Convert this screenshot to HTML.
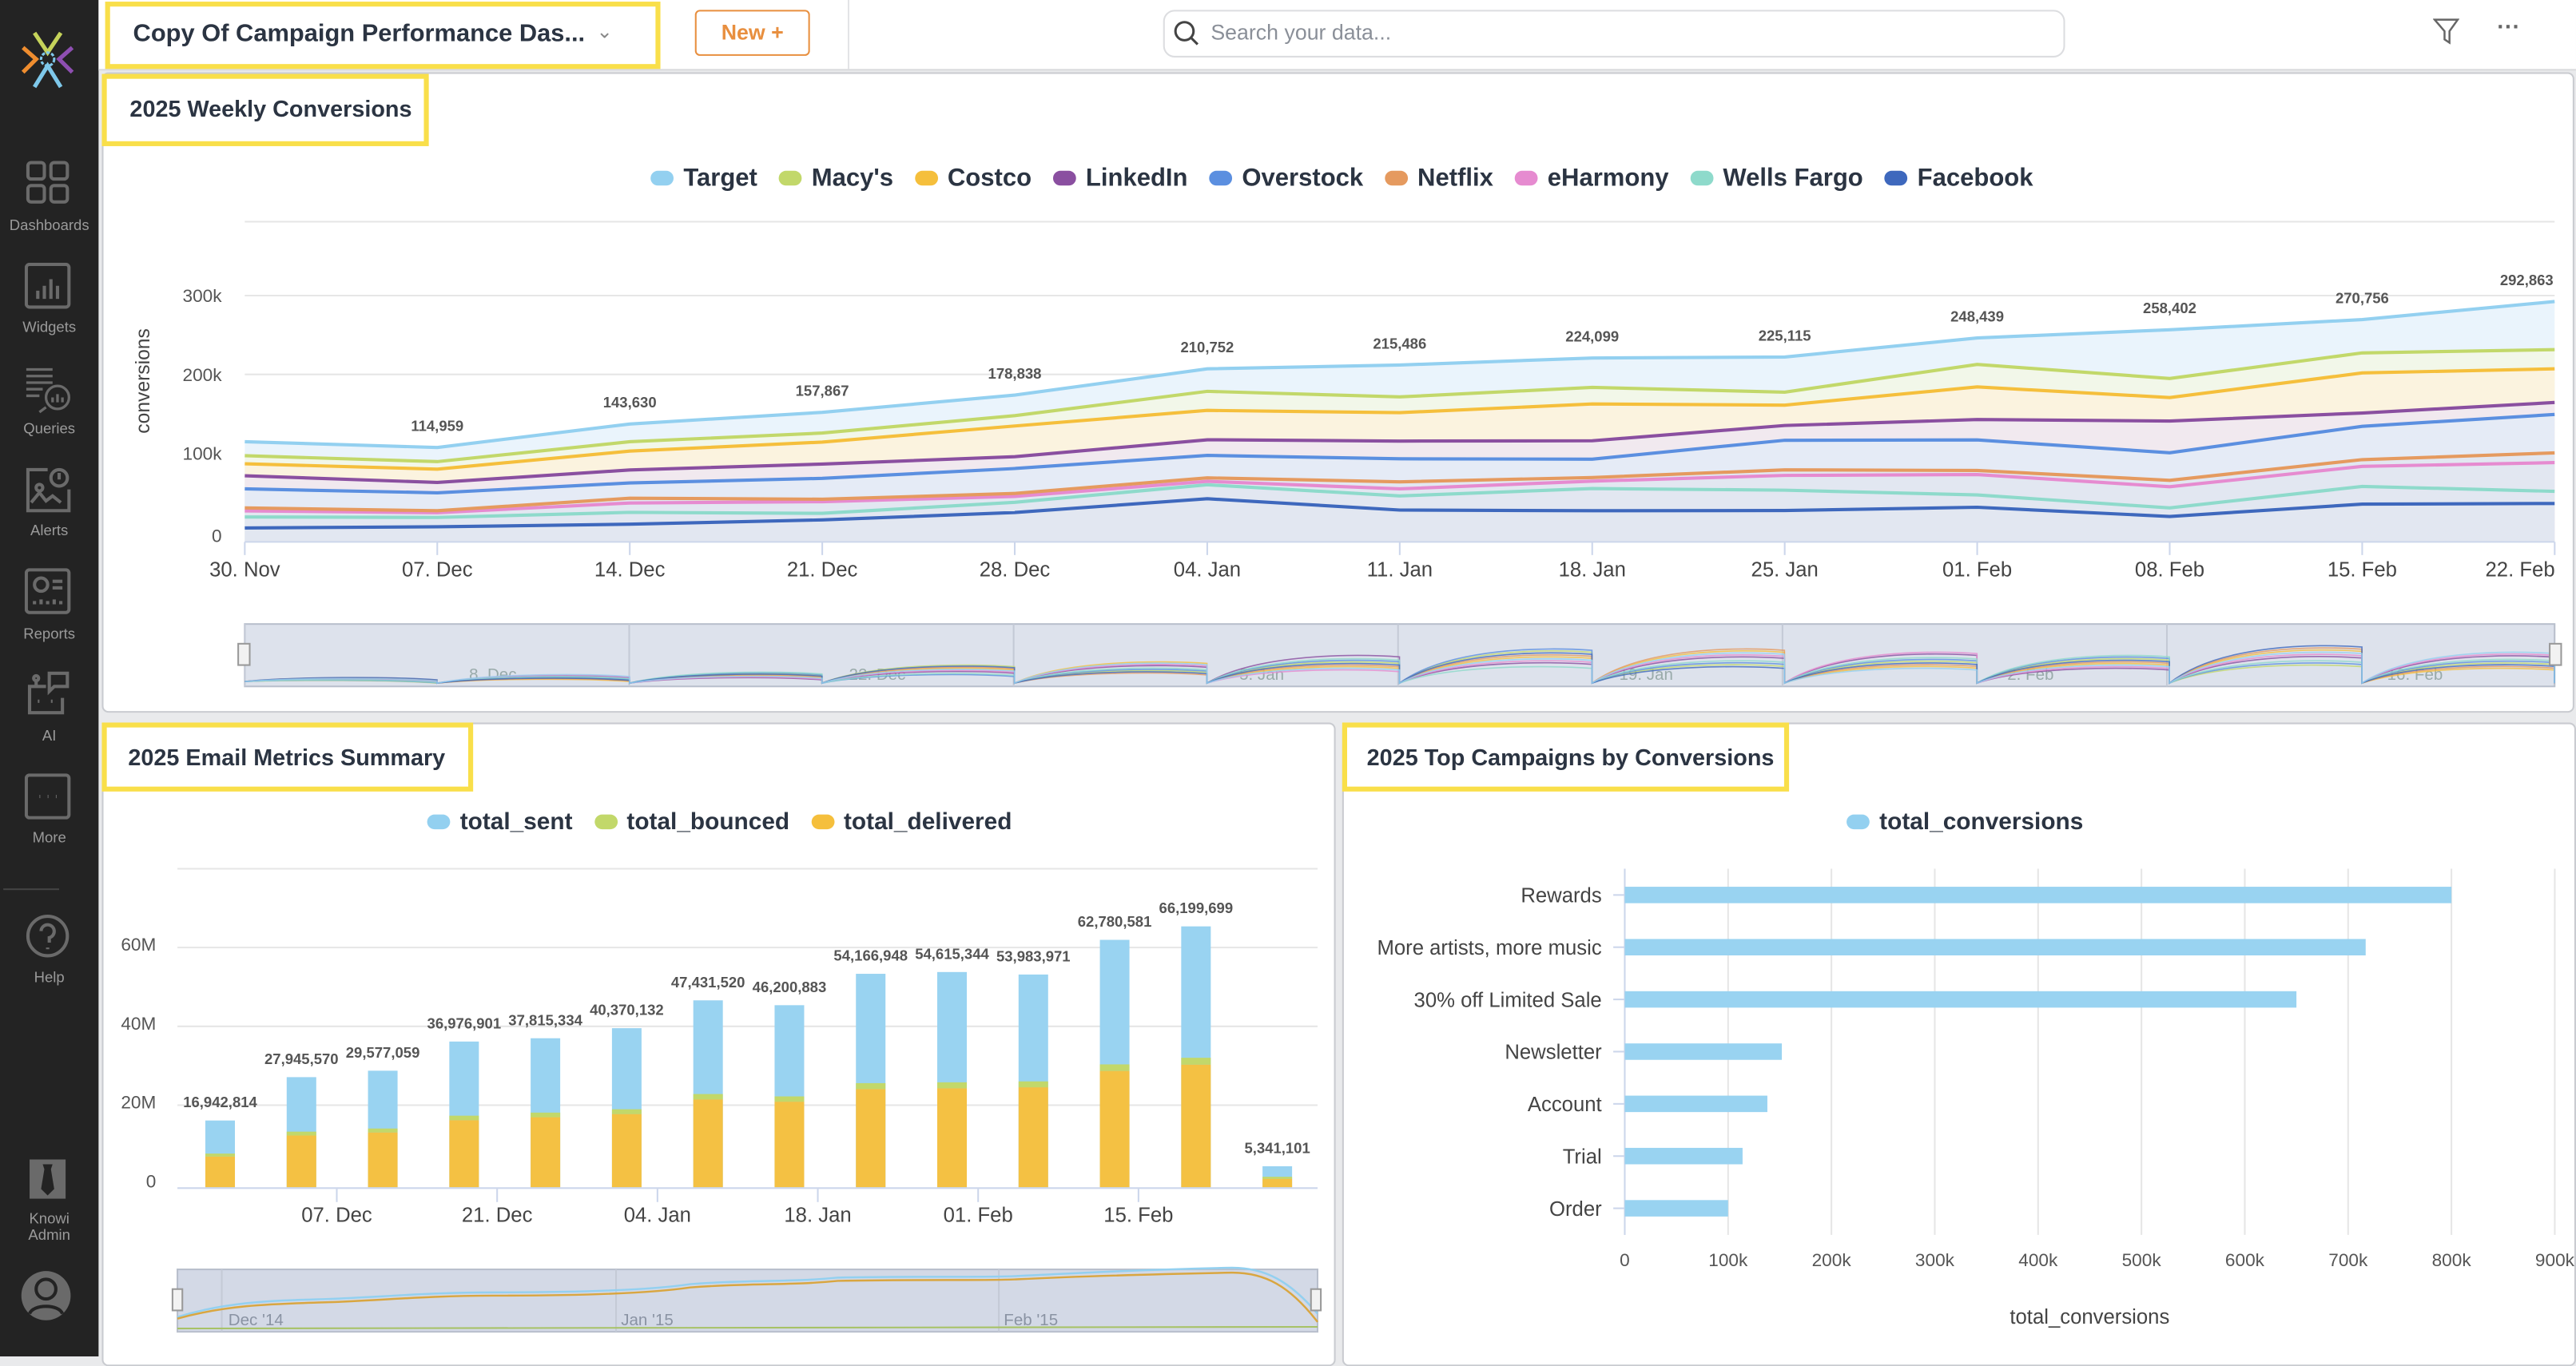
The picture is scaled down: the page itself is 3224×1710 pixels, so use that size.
<!DOCTYPE html>
<html><head><meta charset="utf-8">
<style>
html,body{margin:0;padding:0;width:3224px;height:1698px;overflow:hidden;background:#e9eaec;}
#w{position:absolute;left:0;top:0;width:1568px;height:826px;transform:scale(2.0561,2.0557);transform-origin:0 0;font-family:"Liberation Sans",sans-serif;background:#e9eaec;}
.abs{position:absolute;}
#side{left:0;top:0;width:60px;height:826px;background:#232323;}
.si{position:absolute;left:0;width:60px;text-align:center;color:#9a9a9a;font-size:9px;}
#top{left:60px;top:0;width:1508px;height:42px;background:#fff;border-bottom:1px solid #d8d9dc;}
.yb{position:absolute;background:#f9df4a;}
.yb div{position:absolute;left:3px;top:3px;right:3px;bottom:3px;background:#fff;color:#2b3442;font-weight:bold;white-space:nowrap;}
.panel{position:absolute;background:#fff;border:1px solid #c9cbd0;border-radius:4px;}
.lg{position:absolute;font-size:14.5px;font-weight:bold;color:#2b3442;white-space:nowrap;}
.lg span.d{display:inline-block;width:14px;height:9px;border-radius:5px;margin:0 6px 0 13px;vertical-align:0px;}
svg text{font-family:"Liberation Sans",sans-serif;}
</style></head><body><div id="w">
<div id="side" class="abs">
<svg class="abs" style="left:10px;top:17px" width="38" height="38" viewBox="0 0 38 38">
<path d="M11 3 L19 15 L27 3" stroke="#c5d35a" stroke-width="2.5" fill="none"/>
<path d="M4 12 L12 19 L4 27" stroke="#ef8d2f" stroke-width="2.5" fill="none"/>
<path d="M34 12 L26 19 L34 27" stroke="#8e4fb1" stroke-width="2.5" fill="none"/>
<path d="M11 36 L19 23 L27 36" stroke="#7ec8ea" stroke-width="2.5" fill="none"/>
<circle cx="19" cy="19" r="4" stroke="#7ec8ea" stroke-width="1.5" fill="none" stroke-dasharray="2 1"/>
</svg>
<svg class="abs" style="left:15px;top:97px" width="28" height="28" viewBox="0 0 28 28" fill="none" stroke="#6a6a6a" stroke-width="2"><rect x="2" y="2" width="10" height="10" rx="2"/><rect x="16" y="2" width="10" height="10" rx="2"/><rect x="2" y="16" width="10" height="10" rx="2"/><rect x="16" y="16" width="10" height="10" rx="2"/></svg>
<div class="si" style="top:132px">Dashboards</div>
<svg class="abs" style="left:15px;top:160px" width="28" height="28" viewBox="0 0 28 28" fill="none" stroke="#6a6a6a" stroke-width="2"><rect x="1" y="1" width="26" height="26" rx="2"/><path d="M8 22v-5M12 22v-8M16 22v-12M20 22v-8"/></svg>
<div class="si" style="top:194px">Widgets</div>
<svg class="abs" style="left:14px;top:222px" width="30" height="30" viewBox="0 0 30 30" fill="none" stroke="#6a6a6a" stroke-width="1.6"><path d="M2 3h16M2 7h16M2 11h16M2 15h10M2 19h8"/><circle cx="21" cy="20" r="7" fill="#232323"/><path d="M14 26l-4 3M18 23v-3M21 23v-5M24 23v-3"/></svg>
<div class="si" style="top:256px">Queries</div>
<svg class="abs" style="left:15px;top:284px" width="28" height="28" viewBox="0 0 28 28" fill="none" stroke="#6a6a6a" stroke-width="2"><path d="M14 2H2v25h25V14"/><circle cx="21" cy="7" r="5"/><path d="M21 4v4M4 22l5-6 4 5 4-3 5 4"/><circle cx="9" cy="13" r="2"/></svg>
<div class="si" style="top:318px">Alerts</div>
<svg class="abs" style="left:15px;top:346px" width="28" height="28" viewBox="0 0 28 28" fill="none" stroke="#6a6a6a" stroke-width="2"><rect x="1" y="1" width="26" height="26" rx="2"/><circle cx="10" cy="10" r="4"/><path d="M17 8h6M17 12h6M6 22v-2M10 22v-3M14 22v-2M18 22v-3M22 22v-2"/></svg>
<div class="si" style="top:381px">Reports</div>
<svg class="abs" style="left:15px;top:408px" width="28" height="28" viewBox="0 0 28 28" fill="none" stroke="#6a6a6a" stroke-width="2"><path d="M13 10H3v16h20V17"/><path d="M14 2h12v8h-8l-3 3V2z"/><circle cx="7" cy="5" r="1.5"/><path d="M7 7v3M8 19h1M16 19h1"/></svg>
<div class="si" style="top:443px">AI</div>
<svg class="abs" style="left:15px;top:471px" width="28" height="28" viewBox="0 0 28 28" fill="none" stroke="#6a6a6a" stroke-width="2"><rect x="1" y="1" width="26" height="26" rx="2"/><path d="M9 14h.5M14 14h.5M19 14h.5"/></svg>
<div class="si" style="top:505px">More</div>
<div class="abs" style="left:2px;top:541px;width:34px;height:1px;background:#444"></div>
<svg class="abs" style="left:15px;top:556px" width="28" height="28" viewBox="0 0 28 28" fill="none" stroke="#6a6a6a" stroke-width="2"><circle cx="14" cy="14" r="12"/><path d="M10 11a4 4 0 1 1 5 4v3M14 21v1"/></svg>
<div class="si" style="top:590px">Help</div>
<svg class="abs" style="left:18px;top:706px" width="22" height="24" viewBox="0 0 22 24"><rect x="0" y="0" width="22" height="24" fill="#6a6a6a"/><path d="M8 3h6l-1 3 2 12-4 4-4-4 2-12z" fill="#232323"/></svg>
<div class="si" style="top:737px;line-height:10px">Knowi<br>Admin</div>
<svg class="abs" style="left:12px;top:773px" width="32" height="32" viewBox="0 0 32 32"><circle cx="16" cy="16" r="15" fill="#6a6a6a"/><circle cx="16" cy="12" r="6" fill="none" stroke="#232323" stroke-width="2"/><path d="M6 27c2-6 18-6 20 0" fill="none" stroke="#232323" stroke-width="2"/></svg>
</div>

<div id="top" class="abs">
<div class="yb" style="left:4px;top:1px;width:338px;height:41px"><div style="font-size:15px;line-height:34px;padding-left:14px">Copy Of Campaign Performance Das...<span style="position:absolute;left:296px;top:-2px;color:#888;font-weight:normal;font-size:12px">&#8964;</span></div></div>
<div class="abs" style="left:363px;top:6px;width:68px;height:26px;border:1px solid #e88f3f;border-radius:3px;color:#e88f3f;font-weight:bold;font-size:13px;text-align:center;line-height:26px">New +</div>
<div class="abs" style="left:456px;top:0;width:1px;height:42px;background:#e3e4e6"></div>
<div class="abs" style="left:648px;top:6px;width:547px;height:27px;border:1px solid #dcdde0;border-radius:7px;"></div>
<svg class="abs" style="left:654px;top:12px" width="16" height="16" viewBox="0 0 16 16" fill="none" stroke="#444" stroke-width="1.5"><circle cx="7" cy="7" r="5.5"/><path d="M11 11l4 4"/></svg>
<div class="abs" style="left:677px;top:12px;font-size:13px;color:#8a8f98">Search your data...</div>
<svg class="abs" style="left:1421px;top:11px" width="16" height="16" viewBox="0 0 16 16" fill="none" stroke="#666" stroke-width="1.2"><path d="M1 1h14l-5 7v7l-3-2V8z"/></svg>
<div class="abs" style="left:1460px;top:8px;font-size:14px;color:#666;font-weight:bold">···</div>
</div>

<div class="panel" style="left:62px;top:44px;width:1503px;height:388px"></div>
<div class="panel" style="left:62px;top:440px;width:749px;height:390px"></div>
<div class="panel" style="left:817px;top:440px;width:749px;height:390px"></div>

<div class="yb" style="left:62px;top:45px;width:199px;height:44px"><div style="font-size:14px;line-height:36px;padding-left:14px">2025 Weekly Conversions</div></div>
<div class="yb" style="left:62px;top:440px;width:226px;height:42px"><div style="font-size:14px;line-height:36px;padding-left:13px">2025 Email Metrics Summary</div></div>
<div class="yb" style="left:817px;top:440px;width:272px;height:42px"><div style="font-size:14px;line-height:36px;padding-left:12px">2025 Top Campaigns by Conversions</div></div>

<div class="lg" style="left:383px;top:100px;font-size:15.1px"><span class="d" style="background:#93d0f0"></span>Target<span class="d" style="background:#c2d86a"></span>Macy's<span class="d" style="background:#f5bf3c"></span>Costco<span class="d" style="background:#8a4fa0"></span>LinkedIn<span class="d" style="background:#5b8fe0"></span>Overstock<span class="d" style="background:#e59a5f"></span>Netflix<span class="d" style="background:#e68bd0"></span>eHarmony<span class="d" style="background:#8edacb"></span>Wells Fargo<span class="d" style="background:#3e68bd"></span>Facebook</div>
<div class="lg" style="left:247px;top:493px;font-size:14.5px"><span class="d" style="background:#93d0f0"></span>total_sent<span class="d" style="background:#c2d86a"></span>total_bounced<span class="d" style="background:#f5bf3c"></span>total_delivered</div>
<div class="lg" style="left:1111px;top:493px;font-size:14.5px"><span class="d" style="background:#93d0f0"></span>total_conversions</div>

<svg id="c1" class="abs" style="left:0;top:0" width="1568" height="826"></svg>
</div>
<script>
(function(){
var s='';
function t(x,y,str,o){o=o||{};s+='<text x="'+x+'" y="'+y+'" font-size="'+(o.fs||12)+'" fill="'+(o.c||'#555')+'" text-anchor="'+(o.a||'middle')+'"'+(o.fw?' font-weight="bold"':'')+(o.tr?' transform="'+o.tr+'"':'')+'>'+str+'</text>';}
var x0=149,dx=117.17,y0=330,py=0.0005;
s+='<line x1="149" y1="135" x2="1555" y2="135" stroke="#e6e6e6"/><line x1="149" y1="180" x2="1555" y2="180" stroke="#e6e6e6"/><line x1="149" y1="228" x2="1555" y2="228" stroke="#e6e6e6"/><line x1="149" y1="276" x2="1555" y2="276" stroke="#e6e6e6"/>';
var T=[122000,114959,143630,157867,178838,210752,215486,224099,225115,248439,258402,270756,292863];
var F=[[.86,.85,.85,.84,.86,.87,.82,.84,.81,.87,.77,.85,.8],[.78,.77,.77,.77,.79,.76,.73,.75,.74,.76,.68,.76,.72],[.66,.63,.61,.6,.58,.59,.57,.55,.63,.6,.57,.58,.58],[.53,.52,.5,.49,.5,.5,.47,.45,.55,.5,.42,.52,.53],[.34,.33,.37,.33,.33,.37,.34,.35,.39,.35,.29,.37,.37],[.31,.31,.33,.31,.31,.35,.3,.33,.36,.33,.26,.34,.33],[.25,.26,.25,.22,.27,.33,.26,.29,.28,.23,.16,.25,.21],[.14,.16,.15,.17,.2,.25,.18,.17,.17,.17,.12,.17,.16]];
var C=['#c2d86a','#f5bf3c','#8a4fa0','#5b8fe0','#e59a5f','#e68bd0','#8edacb','#3e68bd'];
function pts(v){return v.map(function(a,i){return (x0+i*dx).toFixed(1)+','+(y0-a*py).toFixed(1);}).join(' ');}
s+='<polygon points="149,330 '+pts(T)+' 1555,330" fill="#eaf4fc"/>';
var fills=['#f4f7e4','#fcf1dc','#efe6f2','#e2ebf8'];
var k,i,v,x;
for(k=0;k<4;k++){v=T.map(function(a,i){return a*F[k][i];});s+='<polygon points="149,330 '+pts(v)+' 1555,330" fill="'+fills[k]+'" opacity=".8"/>';}
s+='<polygon points="149,330 '+pts(T.map(function(a,i){return a*F[4][i];}))+' 1555,330" fill="#dfe4ee" opacity=".6"/>';
for(k=7;k>=0;k--){v=T.map(function(a,i){return a*F[k][i];});s+='<polyline points="'+pts(v)+'" fill="none" stroke="'+C[k]+'" stroke-width="2"/>';}
s+='<polyline points="'+pts(T)+'" fill="none" stroke="#93d0f0" stroke-width="2"/>';
s+='<line x1="149" y1="330" x2="1555" y2="330" stroke="#ccd6eb"/>';
var D=['30. Nov','07. Dec','14. Dec','21. Dec','28. Dec','04. Jan','11. Jan','18. Jan','25. Jan','01. Feb','08. Feb','15. Feb','22. Feb'];
for(i=0;i<13;i++){x=x0+i*dx;s+='<line x1="'+x+'" y1="330" x2="'+x+'" y2="338" stroke="#ccd6eb"/>';t(i==12?1534:x,351,D[i],{fs:12.5,c:'#444'});if(i>0)t(i==12?1538:x,y0-T[i]*py-10,T[i].toLocaleString('en-US'),{fs:9,c:'#555',fw:1});}
[['0',330],['100k',280],['200k',232],['300k',184]].forEach(function(a){t(135,a[1],a[0],{fs:11,c:'#555',a:'end'});});
t(91,232,'conversions',{fs:12,c:'#444',tr:'rotate(-90 91 232)'});
s+='<rect x="149" y="380" width="1406" height="38" fill="#dde2ec" stroke="#b8bfcc"/>';
for(i=0;i<6;i++){var nx=149+i*234;s+='<line x1="'+nx+'" y1="380" x2="'+nx+'" y2="418" stroke="#c4cad6"/>';}
['8. Dec','22. Dec','5. Jan','19. Jan','2. Feb','16. Feb'].forEach(function(l,i){t(300+i*234,414,l,{fs:10,c:'#9aa',a:'middle'});});
var amp=[4,6,8,12,14,18,22,22,20,18,24,20];
for(k=0;k<9;k++){var p='M149,415 ';for(i=0;i<12;i++){var bx=149+i*117.17;var ty=416-amp[i]*(0.5+((k*37+i*13)%10)/18);p+='C'+(bx+30)+','+ty+' '+(bx+90)+','+ty+' '+(bx+117)+','+(ty+2)+' L'+(bx+117)+',416 ';}s+='<path d="'+p+'" fill="none" stroke="'+(k==8?'#93d0f0':C[k])+'" stroke-width="0.8" opacity=".8"/>';}
s+='<rect x="145" y="392" width="7" height="13" fill="#f2f2f2" stroke="#999"/><rect x="1552" y="392" width="7" height="13" fill="#f2f2f2" stroke="#999"/>';
[['0',723],['20M',675],['40M',627],['60M',579]].forEach(function(a){if(a[0]!='0')s+='<line x1="108" y1="'+(a[1]-2)+'" x2="802" y2="'+(a[1]-2)+'" stroke="#e6e6e6"/>';t(95,a[1]-0,a[0],{fs:11,c:'#555',a:'end'});});
s+='<line x1="108" y1="529" x2="802" y2="529" stroke="#e6e6e6"/>';
var E=[16942814,27945570,29577059,36976901,37815334,40370132,47431520,46200883,54166948,54615344,53983971,62780581,66199699,5341101];
var Dl=[.46,.47,.47,.46,.47,.46,.47,.47,.46,.46,.47,.47,.47,.4];
for(i=0;i<14;i++){var bx=125+i*49.5,h=E[i]/1e6*2.4,d=h*Dl[i],b=h*.02+1;s+='<rect x="'+bx+'" y="'+(723-h)+'" width="18" height="'+h+'" fill="#99d3f1"/><rect x="'+bx+'" y="'+(723-d-b)+'" width="18" height="'+b+'" fill="#c2d86a"/><rect x="'+bx+'" y="'+(723-d)+'" width="18" height="'+d+'" fill="#f4c143"/>';t(bx+9,723-h-8,E[i].toLocaleString('en-US'),{fs:9,c:'#555',fw:1});}
s+='<line x1="108" y1="723.5" x2="802" y2="723.5" stroke="#ccd6eb"/>';
['07. Dec','21. Dec','04. Jan','18. Jan','01. Feb','15. Feb'].forEach(function(l,i){var x=205+i*97.6;s+='<line x1="'+x+'" y1="724" x2="'+x+'" y2="732" stroke="#ccd6eb"/>';t(x,744,l,{fs:12.5,c:'#444'});});
s+='<rect x="108" y="773" width="694" height="38" fill="#d3d9e6" stroke="#b8bfcc"/><line x1="135" y1="773" x2="135" y2="811" stroke="#c4cad6"/><line x1="375" y1="773" x2="375" y2="811" stroke="#c4cad6"/><line x1="608" y1="773" x2="608" y2="811" stroke="#c4cad6"/>';
t(139,807,'Dec \'14',{fs:10,c:'#8a93a3',a:'start'});t(378,807,'Jan \'15',{fs:10,c:'#8a93a3',a:'start'});t(611,807,'Feb \'15',{fs:10,c:'#8a93a3',a:'start'});
s+='<path d="M108,802 C140,792 170,792 200,791 C230,790 260,787 300,787 C360,787 400,785 420,782 C460,779 480,781 510,778 C560,777 600,778 620,777 C660,775 700,773 750,772 C770,772 785,780 802,800" fill="none" stroke="#93d0f0" stroke-width="1.2"/>';
s+='<path d="M108,803 C140,794 170,794 200,793 C230,792 260,789 300,789 C360,789 400,787 420,784 C460,781 480,783 510,780 C560,779 600,780 620,779 C660,777 700,776 750,775 C770,775 785,783 802,805" fill="none" stroke="#d9a640" stroke-width="1.2"/>';
s+='<line x1="108" y1="809" x2="802" y2="808" stroke="#a7c266" stroke-width="1"/>';
s+='<rect x="105" y="785" width="6" height="13" fill="#f2f2f2" stroke="#999"/><rect x="798" y="785" width="6" height="13" fill="#f2f2f2" stroke="#999"/>';
for(i=0;i<=9;i++){var gx=989+i*62.9;s+='<line x1="'+gx+'" y1="529" x2="'+gx+'" y2="752" stroke="#e6e6e6"/>';t(i==0?989:gx,771,i==0?'0':(i*100)+'k',{fs:11,c:'#555'});}
s+='<line x1="989" y1="529" x2="989" y2="752" stroke="#ccd6eb"/>';
var B=[['Rewards',800],['More artists, more music',717],['30% off Limited Sale',650],['Newsletter',152],['Account',138],['Trial',114],['Order',100]];
B.forEach(function(b,i){var y=545+i*31.8;s+='<rect x="989" y="'+(y-5)+'" width="'+(b[1]*0.629)+'" height="10" fill="#99d3f1"/><line x1="982" y1="'+y+'" x2="989" y2="'+y+'" stroke="#ccd6eb"/>';t(975,y+4.5,b[0],{fs:12.5,c:'#444',a:'end'});});
t(1272,806,'total_conversions',{fs:12.5,c:'#444'});
document.getElementById('c1').innerHTML=s;
})();
</script>
</body></html>
